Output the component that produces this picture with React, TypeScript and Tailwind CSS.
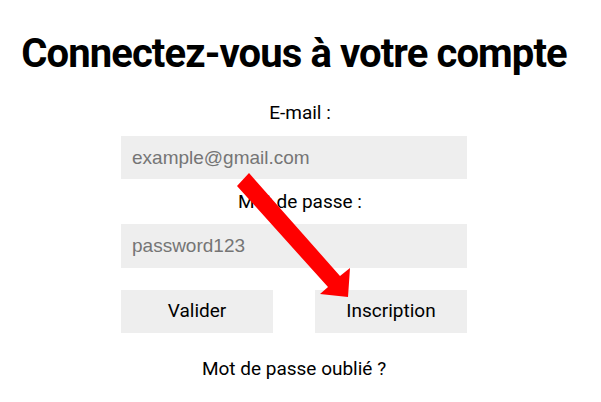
import { useState } from "react";

const roboto = { fontFamily: "Roboto, 'Liberation Sans', sans-serif" };

const Arrow = () => (
  <svg
    className="pointer-events-none absolute left-0 top-0"
    width="601"
    height="402"
    viewBox="0 0 601 402"
  >
    <polygon
      points="249,173 340,276 350,268 348,297 320,294 328,287 237,186"
      fill="#ff0000"
    />
  </svg>
);

export default function App() {
  const [email, setEmail] = useState("");
  const [password, setPassword] = useState("");

  return (
    <div className="relative h-[402px] w-[601px] overflow-hidden bg-white text-black">
      <div className="flex w-[588px] flex-col items-center font-['Roboto',sans-serif]">
        <h1 className="mt-[30px] h-[47px] w-[590px] text-center text-[40px] font-bold leading-[47px] tracking-[-0.9px]">
          Connectez-vous à votre compte
        </h1>

        <label className="mt-[25px] h-[22px] w-full pl-[12px] text-center text-[19px] leading-[22px]">
          E-mail :
        </label>
        <input
          type="email"
          value={email}
          onChange={(e) => setEmail(e.target.value)}
          placeholder="example@gmail.com"
          className="mt-[12px] h-[43px] w-[346px] bg-[#eeeeee] px-[11px] font-['Liberation_Sans',Arial,sans-serif] text-[19px] text-black outline-none placeholder:text-[#757575]"
        />

        <label className="mt-[12px] h-[22px] w-full pl-[12px] text-center text-[19px] leading-[22px]">
          Mot de passe :
        </label>
        <input
          type="password"
          value={password}
          onChange={(e) => setPassword(e.target.value)}
          placeholder="password123"
          className="mt-[11px] h-[44px] w-[346px] bg-[#eeeeee] px-[11px] font-['Liberation_Sans',Arial,sans-serif] text-[19px] text-black outline-none placeholder:text-[#757575]"
        />

        <div className="mt-[22px] flex w-[346px] justify-between">
          <button className="h-[43px] w-[152px] bg-[#eeeeee] text-[19px]" style={roboto}>
            Valider
          </button>
          <button className="h-[43px] w-[152px] bg-[#eeeeee] text-[19px]" style={roboto}>
            Inscription
          </button>
        </div>

        <p className="mt-[25px] h-[22px] text-[19px] leading-[22px]">Mot de passe oublié ?</p>
      </div>
      <Arrow />
    </div>
  );
}
